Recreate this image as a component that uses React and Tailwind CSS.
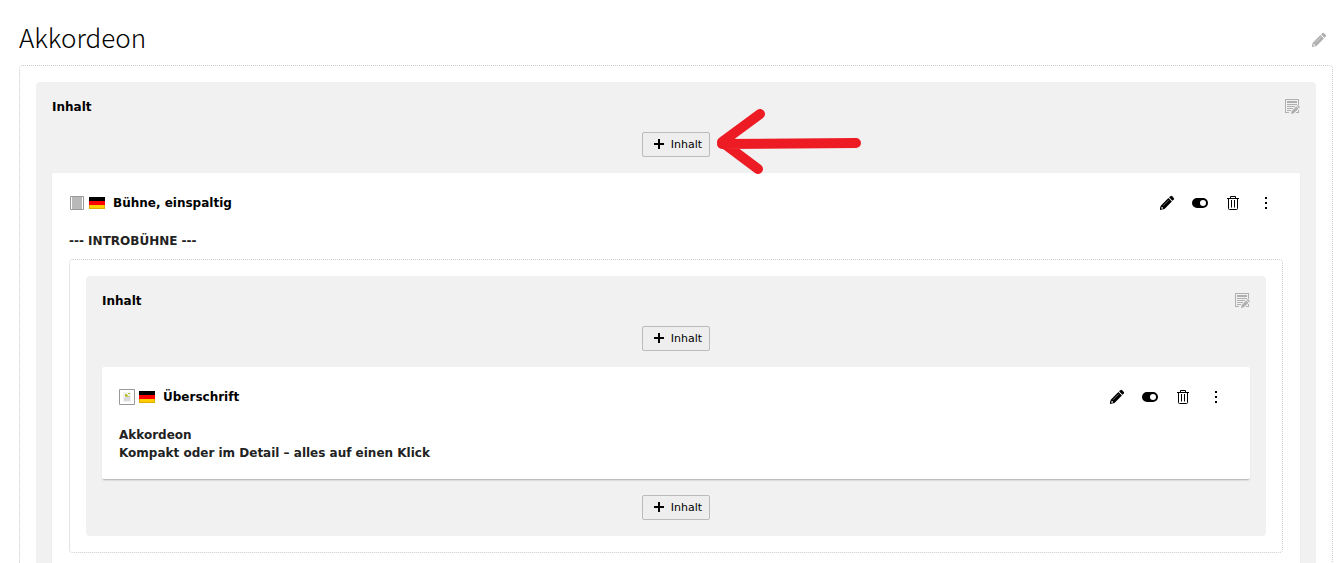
import React from "react";

const PencilIcon = ({ className }) => (
  <svg viewBox="0 0 16 16" fill="currentColor" className={`w-4 h-4 ${className || ""}`} aria-hidden="true">
    <path d="M11.4 1.2q.8-.7 1.6 0l1.8 1.8q.7.8 0 1.6l-1.3 1.2-3.4-3.4z" />
    <path fillRule="evenodd" d="M9.4 3.1 12.9 6.6 5.5 14 1 15 1 12.7 2 10.5zM2.6 12 2.2 13.2 2.8 13.8 4 13.5 3.8 12.3z" />
    <path d="M4 10.8 9.7 5.1" stroke="#fff" strokeOpacity="0.5" strokeWidth="0.8" />
  </svg>
);

const ToggleIcon = () => (
  <svg viewBox="0 0 16 16" fill="currentColor" className="w-4 h-4" aria-hidden="true">
    <path fillRule="evenodd" d="M5 3h6a5 5 0 0 1 0 10H5A5 5 0 0 1 5 3zM11 5a3 3 0 1 0 0 6 3 3 0 0 0 0-6z" />
  </svg>
);

const TrashIcon = () => (
  <svg viewBox="0 0 16 16" fill="none" stroke="currentColor" className="w-4 h-4" aria-hidden="true">
    <path d="M2 3.5h12M5.5 3V1.5h5V3M3.5 4v9.5a1 1 0 0 0 1 1h7a1 1 0 0 0 1-1V4M6.5 5v7.5M9.5 5v7.5" />
  </svg>
);

const MoreIcon = () => (
  <svg viewBox="0 0 16 16" fill="currentColor" className="w-4 h-4" aria-hidden="true">
    <path d="M7 2h2v2H7zM7 7h2v2H7zM7 12h2v2H7z" />
  </svg>
);

const EditListIcon = () => (
  <svg viewBox="0 0 16 16" fill="currentColor" className="w-4 h-4" aria-hidden="true">
    <path d="M1 0h14v6h-1V1H2v12h3v1H1z" />
    <path d="M3 2h10v2H3zM3 5h10v1H3zM3 7h8v1H3zM3 9h6v1H3zM3 11h4v1H3zM14 11h1v3h-3v-1h2z" />
    <path d="M13.8 6 16 8.1 15 9.2 12.7 7zM12.2 7.5 14.5 9.7 9.8 14.2 7 15 7.7 12z" />
  </svg>
);

const ColumnIcon = () => (
  <svg viewBox="0 0 16 16" className="w-4 h-4" aria-hidden="true">
    <path d="M1.5 1.5h13v13h-13z" fill="#fff" stroke="#999" />
    <path d="M3 2h10v12H3z" fill="#b9b9b9" />
  </svg>
);

const HeadlineIcon = () => (
  <svg viewBox="0 0 16 16" className="w-4 h-4" aria-hidden="true">
    <path d="M.5 .5h15v15H.5z" fill="#fff" stroke="#999" />
    <path d="M4 3h8v10H4z" fill="#f2f2f2" />
    <path d="M5 8h6v4H5z" fill="#d9dade" />
    <path d="M6 5h2v1h1v1H6zM9 4h2v1H9z" fill="#b5bd2c" />
    <path d="M6 7h5v1H6z" fill="#c8d07a" />
  </svg>
);

const GermanFlag = () => (
  <svg viewBox="0 0 16 12" className="w-4 h-3" role="img" aria-label="Deutsch">
    <path d="M0 0h16v4H0z" fill="#000" />
    <path d="M0 4h16v4H0z" fill="#f00" />
    <path d="M0 8h16v4H0z" fill="#e0ac00" />
    <path d="M1 8h14v3H1z" fill="#ffcd00" />
  </svg>
);

function AddButton() {
  return (
    <button
      type="button"
      className="mx-auto flex h-[25px] items-center gap-1 rounded-xs border border-[#bbb] bg-[#eee] pl-2 pr-[7px] text-[11px] text-black"
    >
      <svg viewBox="0 0 16 16" fill="currentColor" className="w-4 h-4" aria-hidden="true">
        <path d="M7 2h2v4h4v2H9v4H7V8H3V6h4z" />
      </svg>
      Inhalt
    </button>
  );
}

// Grey content column with its title and the list of elements
function Column({ title, appendable, children }) {
  return (
    <div className="rounded border border-dotted border-[#ccc] p-4">
      <section className="space-y-4 rounded bg-[#f1f1f1] p-4">
        <div className="flex h-[18px] items-center justify-between">
          <h2 className="font-bold">{title}</h2>
          <button type="button" aria-label="Spalte bearbeiten" className="text-[#b0b0b0]">
            <EditListIcon />
          </button>
        </div>
        <AddButton />
        {children}
        {appendable && <AddButton />}
      </section>
    </div>
  );
}

function ElementCard({ icon, title, children }) {
  return (
    <article className="rounded-xs bg-white px-[17px] pt-4 pb-[17px] shadow-[0_2px_2px_-1px_rgba(0,0,0,0.3)]">
      <header className="mb-[15px] flex h-7 items-center justify-between">
        <div className="flex items-center gap-1">
          {icon}
          <GermanFlag />
          <h3 className="pl-1 font-bold">{title}</h3>
        </div>
        <div className="flex items-center gap-[17px] pr-[9px]">
          <button type="button" aria-label="Bearbeiten"><PencilIcon /></button>
          <button type="button" aria-label="Sichtbarkeit umschalten"><ToggleIcon /></button>
          <button type="button" aria-label="Löschen"><TrashIcon /></button>
          <button type="button" aria-label="Weitere Aktionen"><MoreIcon /></button>
        </div>
      </header>
      {children}
    </article>
  );
}

export default function App() {
  return (
    <div className="h-screen overflow-hidden bg-white pl-[19px] pr-[7px] pt-5 font-[Verdana,'DejaVu_Sans',sans-serif] text-[12px] leading-[18px] text-black">
      <div className="flex h-[45px] items-start justify-between pr-1.5">
        <h1 className="font-['Noto_Sans_CJK_SC',sans-serif] text-[26px] font-light leading-[34px]">Akkordeon</h1>
        <button type="button" aria-label="Seite bearbeiten" className="mt-3 text-[#b0b0b0]">
          <PencilIcon />
        </button>
      </div>

      <main className="relative">
        <Column title="Inhalt">
          <ElementCard icon={<ColumnIcon />} title="Bühne, einspaltig">
            <p className="mb-[9px] font-bold text-[#222]">--- INTROBÜHNE ---</p>
            <Column title="Inhalt" appendable>
              <ElementCard icon={<HeadlineIcon />} title="Überschrift">
                <p className="font-bold text-[#222]">
                  Akkordeon
                  <br />
                  Kompakt oder im Detail – alles auf einen Klick
                </p>
              </ElementCard>
            </Column>
          </ElementCard>
        </Column>

        {/* Arrow pointing at the first add button */}
        <svg
          viewBox="0 0 146 68"
          fill="none"
          stroke="#ed1c24"
          strokeWidth="10"
          strokeLinecap="round"
          strokeLinejoin="round"
          className="pointer-events-none absolute left-1/2 top-[42px] ml-[40px] h-[68px] w-[146px]"
          aria-hidden="true"
        >
          <path d="M44 7 6 35 42 62M6 37 140 36" />
        </svg>
      </main>
    </div>
  );
}
